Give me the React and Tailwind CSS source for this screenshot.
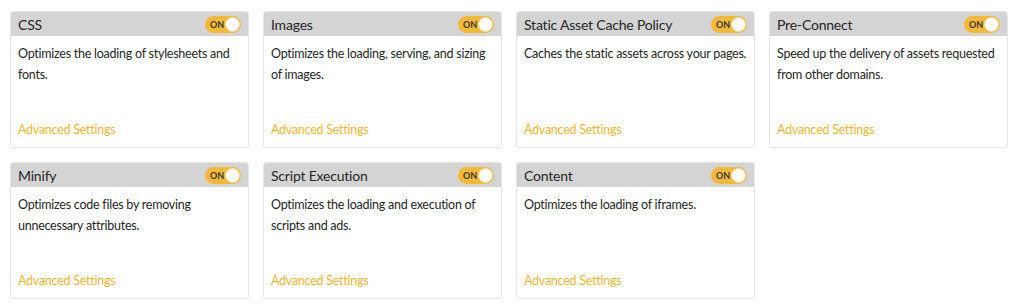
import React from 'react';

// lines are split as in the design so wrapping doesn't depend on font metrics
const modules = [
  { title: 'CSS', lines: ['Optimizes the loading of stylesheets and', 'fonts.'] },
  { title: 'Images', lines: ['Optimizes the loading, serving, and sizing', 'of images.'] },
  { title: 'Static Asset Cache Policy', lines: ['Caches the static assets across your pages.'] },
  { title: 'Pre-Connect', lines: ['Speed up the delivery of assets requested', 'from other domains.'] },
  { title: 'Minify', lines: ['Optimizes code files by removing', 'unnecessary attributes.'] },
  { title: 'Script Execution', lines: ['Optimizes the loading and execution of', 'scripts and ads.'] },
  { title: 'Content', lines: ['Optimizes the loading of iframes.'] },
];

function Toggle() {
  return (
    <div className="flex h-[17px] w-[36px] items-center rounded-full bg-[#f5b935] pl-[5px] pr-[1px]">
      <span className="text-[9px] font-bold leading-none text-[#3a3a3a]">ON</span>
      <span className="ml-auto h-[15px] w-[15px] rounded-full border border-[#e9d9a8] bg-white"></span>
    </div>
  );
}

function ModuleCard({ title, lines }) {
  return (
    <div className="flex h-[137px] flex-col overflow-hidden rounded-[3px] border border-[#e6e6e6] bg-white">
      <div className="flex h-[24px] items-center justify-between bg-[#d4d4d4] pl-[7px] pr-[7px]">
        <span className="text-[14px] tracking-[-0.2px] text-[#262626]">{title}</span>
        <Toggle />
      </div>
      <p className="whitespace-nowrap pl-[7px] pt-[7px] text-[12.5px] leading-[21px] tracking-[-0.25px] text-[#262626]">
        {lines.map((line, i) => (
          <span key={i} className="block">{line}</span>
        ))}
      </p>
      <a className="mt-auto mb-[7px] px-[7px] text-[12.5px] tracking-[-0.25px] text-[#f5b731]" href="#">
        Advanced Settings
      </a>
    </div>
  );
}

export default function App() {
  return (
    <div className="min-h-[308px] bg-white pl-[10px] pt-[11px] font-['Lato',sans-serif]">
      <div className="grid w-[998px] grid-cols-4 gap-[14px]">
        {modules.map((m) => (
          <ModuleCard key={m.title} {...m} />
        ))}
      </div>
    </div>
  );
}
